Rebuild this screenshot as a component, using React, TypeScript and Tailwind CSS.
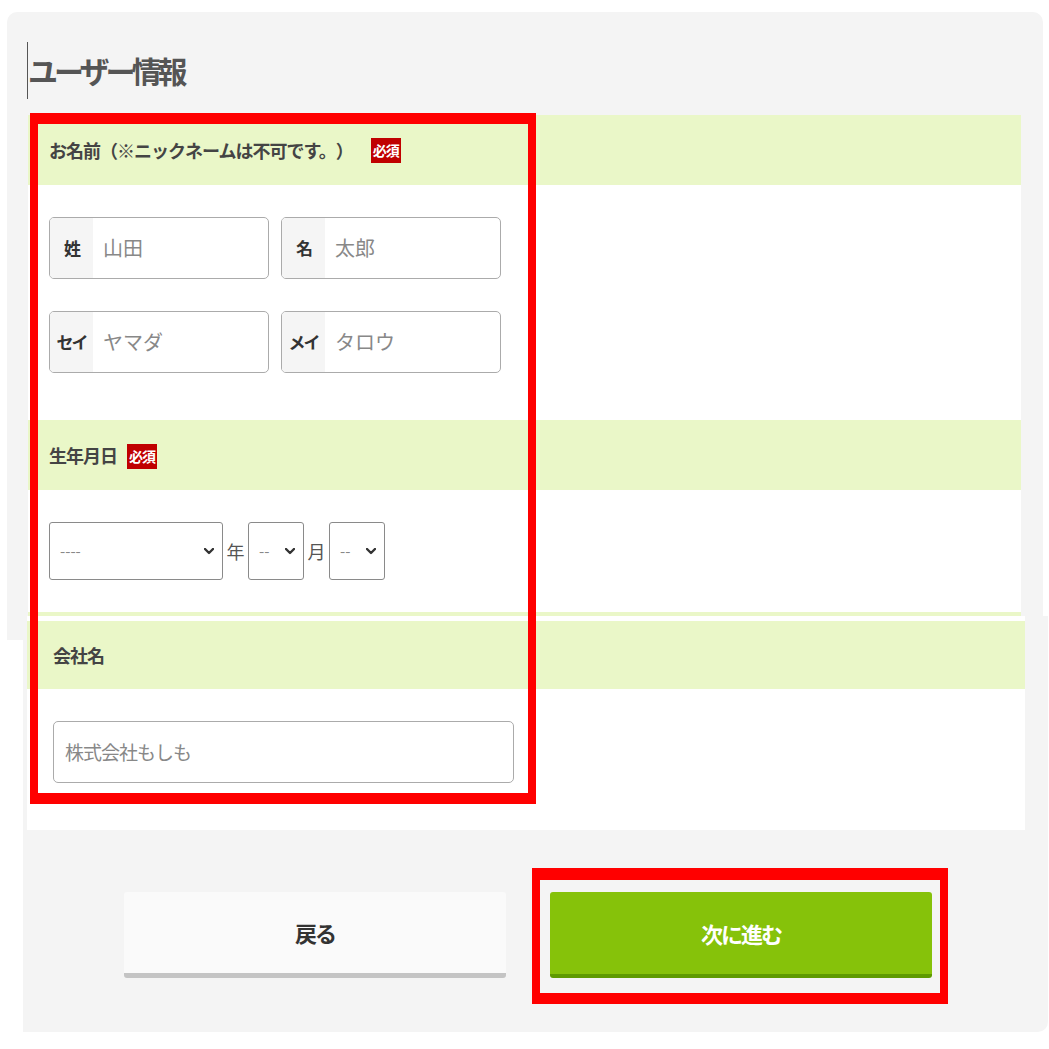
import React from "react";

const jp = "font-['Noto_Sans_CJK_JP','Noto_Sans',sans-serif] [text-spacing-trim:space-all]";

function Badge() {
  return (
    <span className="ml-[18px] inline-flex h-[25px] w-[30px] items-center justify-center bg-[#c00000] text-[14px] font-bold leading-none tracking-[-1px] text-white">
      必須
    </span>
  );
}

function NameField({ label, placeholder }: { label: string; placeholder: string }) {
  return (
    <div className="flex h-[62px] w-[220px] overflow-hidden rounded-[5px] border border-[#ababab] bg-white">
      <div className="flex w-[43px] shrink-0 items-center justify-center bg-[#f5f5f5] text-[17px] font-bold tracking-[-2px] text-[#333]">
        {label}
      </div>
      <div className="flex items-center pl-[10px] text-[20px] text-[#888]">{placeholder}</div>
    </div>
  );
}

function Chevron() {
  return (
    <svg width="10" height="7" viewBox="0 0 10 7" className="shrink-0">
      <polyline points="1,1 5,5 9,1" fill="none" stroke="#333" strokeWidth="2.4" strokeLinecap="round" strokeLinejoin="round" />
    </svg>
  );
}

function Select({ w, text }: { w: string; text: string }) {
  return (
    <div className={`flex h-[58px] ${w} items-center justify-between rounded-[3px] border border-[#8a8a8a] bg-white pl-[10px] pr-[8px]`}>
      <span className="text-[15px] text-[#888]">{text}</span>
      <Chevron />
    </div>
  );
}

export default function App() {
  return (
    <div className={`relative h-[1049px] w-[1049px] overflow-hidden bg-white ${jp}`}>
      {/* top panel */}
      <div className="ml-[7px] mt-[12px] h-[628px] w-[1036px] overflow-hidden rounded-t-[10px] bg-[#f4f4f4]">
        <div className="flex h-[103px] items-center pl-[20px] pt-[13px]">
          <div className="h-[57px] w-px bg-[#555]" />
          <h1 className="text-[30px] font-bold tracking-[-4px] text-[#555]">ユーザー情報</h1>
        </div>
        <div className="ml-[21px] w-[993px] bg-white">
          <div className="flex h-[70px] items-center bg-[#eaf7c8] pl-[21px] text-[18px] font-bold tracking-[-1px] text-[#444]">
            お名前（※ニックネームは不可です。）
            <Badge />
          </div>
          <div className="flex h-[235px] flex-col gap-[32px] pl-[21px] pt-[32px]">
            <div className="flex gap-[12px]">
              <NameField label="姓" placeholder="山田" />
              <NameField label="名" placeholder="太郎" />
            </div>
            <div className="flex gap-[12px]">
              <NameField label="セイ" placeholder="ヤマダ" />
              <NameField label="メイ" placeholder="タロウ" />
            </div>
          </div>
          <div className="flex h-[70px] items-center bg-[#eaf7c8] pl-[21px] text-[18px] font-bold tracking-[-1px] text-[#444]">
            生年月日
            <span className="-ml-[8px]">
              <Badge />
            </span>
          </div>
          <div className="flex h-[122px] items-start pl-[21px] pt-[32px]">
            <div className="flex items-center gap-[3.5px] text-[18px] text-[#555]">
              <Select w="w-[174px]" text="----" />
              <span>年</span>
              <Select w="w-[56px]" text="--" />
              <span>月</span>
              <Select w="w-[56px]" text="--" />
            </div>
          </div>
          <div className="h-[30px] bg-[#eaf7c8]" />
        </div>
      </div>

      {/* bottom panel */}
      <div className="relative z-10 -mt-[24px] ml-[23px] h-[416px] w-[1025px] rounded-br-[10px] bg-[#f4f4f4]">
        <div className="ml-[4px] w-[998px] bg-white pt-[5px]">
          <div className="flex h-[68px] items-center bg-[#eaf7c8] pl-[26px] text-[18px] font-bold tracking-[-1px] text-[#444]">
            会社名
          </div>
          <div className="h-[141px] pl-[26px] pt-[32px]">
            <div className="flex h-[62px] w-[461px] items-center rounded-[5px] border border-[#ababab] bg-white pl-[11px] text-[19px] tracking-[-1px] text-[#888]">
              株式会社もしも
            </div>
          </div>
        </div>
        <div className="flex gap-[44px] pl-[101px] pt-[62px]">
          <div className="flex h-[86px] w-[382px] items-center justify-center rounded-[3px] border-b-[5px] border-[#c4c4c4] bg-[#fafafa] text-[22px] font-bold tracking-[-2px] text-[#333]">
            戻る
          </div>
          <div className="flex h-[86px] w-[382px] items-center justify-center rounded-[3px] border-b-[4px] border-[#5e9a00] bg-[#86c20a] text-[22px] font-bold tracking-[-2px] text-white">
            次に進む
          </div>
        </div>
      </div>

      {/* annotation boxes */}
      <div className="pointer-events-none absolute left-[30px] top-[113px] z-20 h-[691px] w-[506px] border-x-[8px] border-y-[11px] border-[#ff0000]" />
      <div className="pointer-events-none absolute left-[532px] top-[868px] z-20 h-[136px] w-[416px] border-x-[8px] border-b-[11px] border-t-[12px] border-[#ff0000]" />
    </div>
  );
}
